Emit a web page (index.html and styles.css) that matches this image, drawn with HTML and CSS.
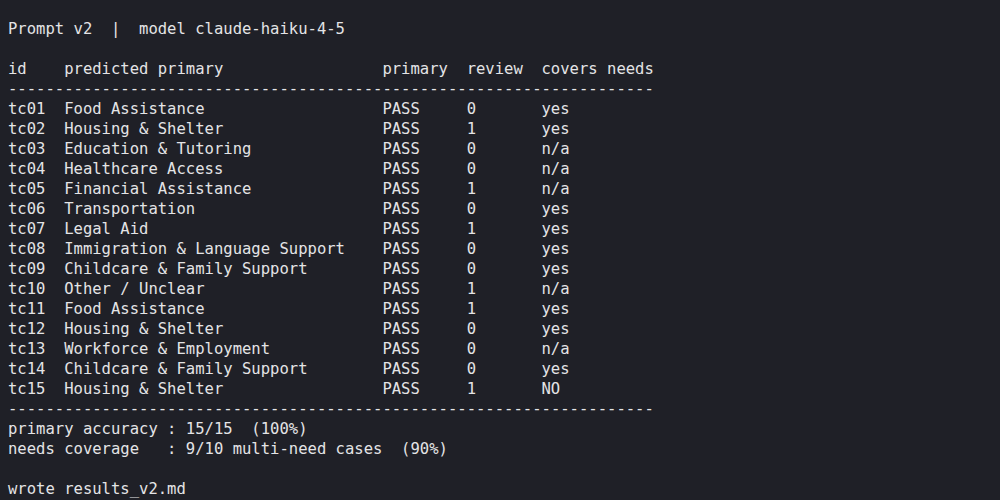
FILE: index.html
```html
<!DOCTYPE html>
<html lang="en">
<head>
<meta charset="utf-8">
<title>Prompt v2 results</title>
<link rel="stylesheet" href="styles.css">
</head>
<body>
<div class="term">
  <div class="line">Prompt v2  |  model claude-haiku-4-5</div>
  <div class="line blank"></div>
  <div class="row"><span>id</span><span>predicted primary</span><span>primary</span><span>review</span><span>covers needs</span></div>
  <div class="line">---------------------------------------------------------------------</div>
  <div class="row"><span>tc01</span><span>Food Assistance</span><span>PASS</span><span>0</span><span>yes</span></div>
  <div class="row"><span>tc02</span><span>Housing &amp; Shelter</span><span>PASS</span><span>1</span><span>yes</span></div>
  <div class="row"><span>tc03</span><span>Education &amp; Tutoring</span><span>PASS</span><span>0</span><span>n/a</span></div>
  <div class="row"><span>tc04</span><span>Healthcare Access</span><span>PASS</span><span>0</span><span>n/a</span></div>
  <div class="row"><span>tc05</span><span>Financial Assistance</span><span>PASS</span><span>1</span><span>n/a</span></div>
  <div class="row"><span>tc06</span><span>Transportation</span><span>PASS</span><span>0</span><span>yes</span></div>
  <div class="row"><span>tc07</span><span>Legal Aid</span><span>PASS</span><span>1</span><span>yes</span></div>
  <div class="row"><span>tc08</span><span>Immigration &amp; Language Support</span><span>PASS</span><span>0</span><span>yes</span></div>
  <div class="row"><span>tc09</span><span>Childcare &amp; Family Support</span><span>PASS</span><span>0</span><span>yes</span></div>
  <div class="row"><span>tc10</span><span>Other / Unclear</span><span>PASS</span><span>1</span><span>n/a</span></div>
  <div class="row"><span>tc11</span><span>Food Assistance</span><span>PASS</span><span>1</span><span>yes</span></div>
  <div class="row"><span>tc12</span><span>Housing &amp; Shelter</span><span>PASS</span><span>0</span><span>yes</span></div>
  <div class="row"><span>tc13</span><span>Workforce &amp; Employment</span><span>PASS</span><span>0</span><span>n/a</span></div>
  <div class="row"><span>tc14</span><span>Childcare &amp; Family Support</span><span>PASS</span><span>0</span><span>yes</span></div>
  <div class="row"><span>tc15</span><span>Housing &amp; Shelter</span><span>PASS</span><span>1</span><span>NO</span></div>
  <div class="line">---------------------------------------------------------------------</div>
  <div class="line">primary accuracy : 15/15  (100%)</div>
  <div class="line">needs coverage   : 9/10 multi-need cases  (90%)</div>
  <div class="line blank"></div>
  <div class="line">wrote results_v2.md</div>
</div>
</body>
</html>
```

FILE: styles.css
```css
html, body {
  margin: 0;
  padding: 0;
  background: #1f2027;
  height: 100%;
  overflow: hidden;
}

.term {
  padding: 19px 8px 0 8px;
  font-family: "DejaVu Sans Mono", "Liberation Mono", monospace;
  font-size: 15.55px;
  line-height: 20px;
  color: #e4e4e6;
}

.line {
  white-space: pre;
  height: 20px;
}

.row {
  display: grid;
  grid-template-columns: 6ch 34ch 9ch 8ch auto;
  white-space: pre;
  height: 20px;
}
```
